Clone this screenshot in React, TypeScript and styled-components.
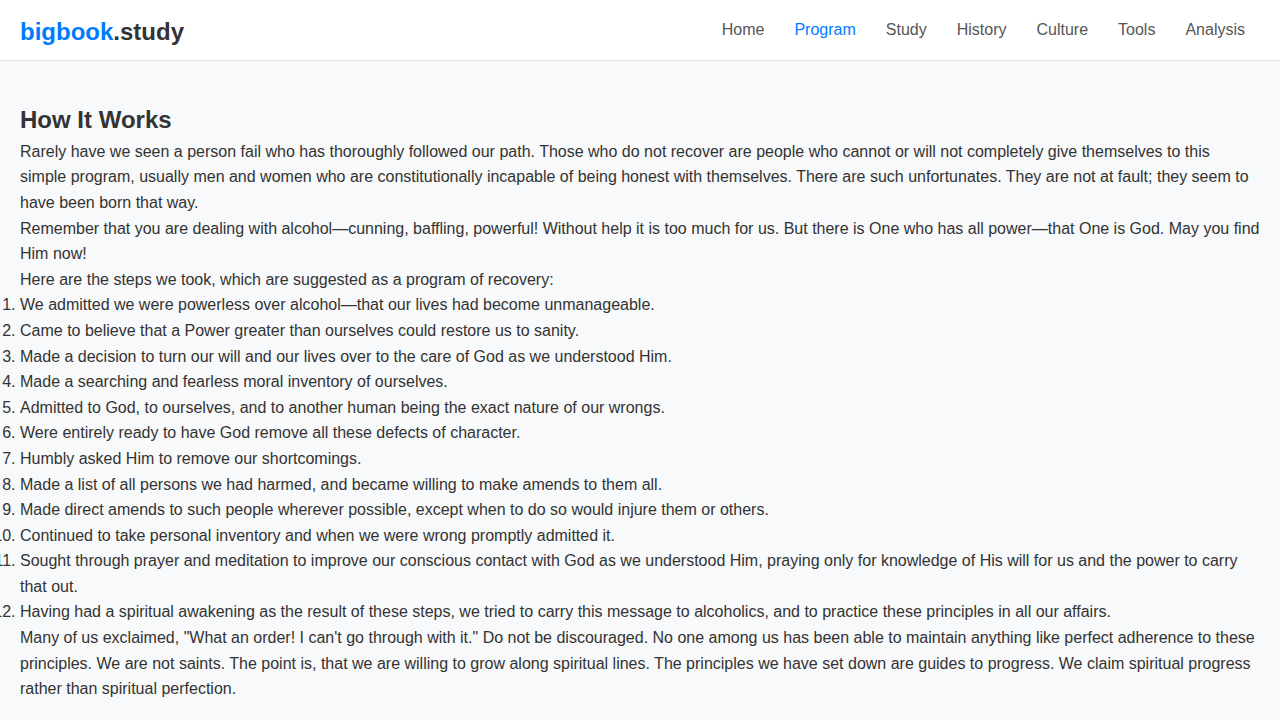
import React from "react";
import styled, { createGlobalStyle } from "styled-components";

const Global = createGlobalStyle`
  html, body { margin: 0; padding: 0; }
  body {
    background: #f8f9fa;
    font-family: "Liberation Sans", Arial, sans-serif;
    color: #333;
  }
`;

const Header = styled.header`
  height: 60px;
  background: #fff;
  border-bottom: 1px solid #e0e0e0;
  display: flex;
  align-items: center;
  justify-content: space-between;
  padding: 0 20px;
`;

const Logo = styled.a`
  font-size: 24px;
  font-weight: 700;
  color: #333;
  text-decoration: none;
  margin-top: 4px;
  span { color: #007bff; }
`;

const Nav = styled.nav`
  display: flex;
  align-items: center;
`;

const NavLink = styled.a<{ $active?: boolean }>`
  padding: 0 15px;
  font-size: 16px;
  color: ${(p) => (p.$active ? "#007bff" : "#555")};
  text-decoration: none;
`;

const Main = styled.main`
  padding: 40px 20px 20px;
`;

const Title = styled.h2`
  font-size: 24px;
  font-weight: 700;
  line-height: 1.2;
  margin: 0 0 4px;
  padding-top: 5px;
`;

const Para = styled.p`
  margin: 0;
  font-size: 16px;
  line-height: 1.6;
`;

const Steps = styled.ol`
  margin: 0;
  padding: 0;
  list-style-position: outside;
  font-size: 16px;
  line-height: 1.6;
`;

const links = ["Home", "Program", "Study", "History", "Culture", "Tools", "Analysis"];

const steps = [
  "We admitted we were powerless over alcohol\u2014that our lives had become unmanageable.",
  "Came to believe that a Power greater than ourselves could restore us to sanity.",
  "Made a decision to turn our will and our lives over to the care of God as we understood Him.",
  "Made a searching and fearless moral inventory of ourselves.",
  "Admitted to God, to ourselves, and to another human being the exact nature of our wrongs.",
  "Were entirely ready to have God remove all these defects of character.",
  "Humbly asked Him to remove our shortcomings.",
  "Made a list of all persons we had harmed, and became willing to make amends to them all.",
  "Made direct amends to such people wherever possible, except when to do so would injure them or others.",
  "Continued to take personal inventory and when we were wrong promptly admitted it.",
  "Sought through prayer and meditation to improve our conscious contact with God as we understood Him, praying only for knowledge of His will for us and the power to carry that out.",
  "Having had a spiritual awakening as the result of these steps, we tried to carry this message to alcoholics, and to practice these principles in all our affairs.",
];

export default function App() {
  return (
    <>
      <Global />
      <Header>
        <Logo href="#"><span>bigbook</span>.study</Logo>
        <Nav>
          {links.map((l) => (
            <NavLink key={l} href="#" $active={l === "Program"}>{l}</NavLink>
          ))}
        </Nav>
      </Header>
      <Main>
        <Title>How It Works</Title>
        <Para>
          Rarely have we seen a person fail who has thoroughly followed our path. Those who do not recover are people who cannot or will not completely give themselves to this simple program, usually men and women who are constitutionally incapable of being honest with themselves. There are such unfortunates. They are not at fault; they seem to have been born that way.
        </Para>
        <Para>
          Remember that you are dealing with alcohol{"\u2014"}cunning, baffling, powerful! Without help it is too much for us. But there is One who has all power{"\u2014"}that One is God. May you find Him now!
        </Para>
        <Para>Here are the steps we took, which are suggested as a program of recovery:</Para>
        <Steps>
          {steps.map((s, i) => (
            <li key={i}>{s}</li>
          ))}
        </Steps>
        <Para>
          Many of us exclaimed, "What an order! I can't go through with it." Do not be discouraged. No one among us has been able to maintain anything like perfect adherence to these principles. We are not saints. The point is, that we are willing to grow along spiritual lines. The principles we have set down are guides to progress. We claim spiritual progress rather than spiritual perfection.
        </Para>
      </Main>
    </>
  );
}
